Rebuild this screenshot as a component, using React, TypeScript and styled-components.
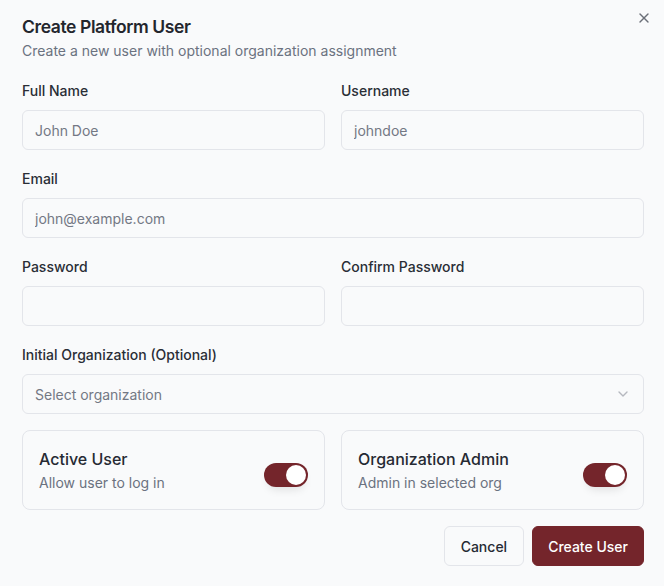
import React, { useState } from 'react'
import styled, { createGlobalStyle } from 'styled-components'

const GlobalStyle = createGlobalStyle`
  html, body {
    margin: 0;
    padding: 0;
    background: #f9fafb;
  }
  body {
    font-family: Inter, 'Noto Sans', sans-serif;
    color: #262a33;
  }
  * {
    box-sizing: border-box;
  }
`

const Dialog = styled.div`
  position: relative;
  width: 664px;
  height: 586px;
  padding: 18px 20px 20px 22px;
  background: #f9fafb;
`

const CloseButton = styled.button`
  position: absolute;
  top: 10px;
  right: 12px;
  width: 16px;
  height: 16px;
  padding: 0;
  border: none;
  background: transparent;
  color: #6b6f78;
  display: flex;
  align-items: center;
  justify-content: center;
  cursor: pointer;
`

const Header = styled.div`
  display: flex;
  flex-direction: column;
  gap: 6px;
`

const Title = styled.h2`
  margin: 0;
  font-size: 17.5px;
  line-height: 17px;
  font-weight: 600;
  letter-spacing: -0.4px;
  color: #23262d;
`

const Subtitle = styled.p`
  margin: 0;
  font-size: 14px;
  line-height: 20px;
  color: #6b7280;
`

const Form = styled.form`
  display: flex;
  flex-direction: column;
  gap: 19px;
  margin-top: 20px;
`

const Row = styled.div<{ cols?: number }>`
  display: grid;
  grid-template-columns: ${({ cols = 1 }) => `repeat(${cols}, 1fr)`};
  gap: 16px;
`

const Field = styled.div`
  display: flex;
  flex-direction: column;
  gap: 9px;
`

const Label = styled.label`
  font-size: 14px;
  line-height: 20px;
  font-weight: 500;
  color: #2a2e36;
`

const Input = styled.input`
  height: 40px;
  width: 100%;
  padding: 0 12px;
  border: 1px solid #e3e5ea;
  border-radius: 6px;
  background: transparent;
  font-family: inherit;
  font-size: 14px;
  color: #262a33;
  outline: none;

  &::placeholder {
    color: #737884;
  }
`

const SelectBox = styled.div`
  height: 40px;
  display: flex;
  align-items: center;
  justify-content: space-between;
  padding: 0 12px;
  border: 1px solid #e3e5ea;
  border-radius: 6px;
  font-size: 14px;
  color: #737884;
`

const Chevron = styled.svg`
  opacity: 0.5;
`

const ToggleGroup = styled(Row)`
  margin-top: -3px;
`

const ToggleCard = styled.div`
  height: 80px;
  display: flex;
  align-items: center;
  justify-content: space-between;
  padding: 0 16px;
  border: 1px solid #e3e5ea;
  border-radius: 8px;
`

const ToggleText = styled.div`
  display: flex;
  flex-direction: column;
  gap: 2px;
`

const ToggleTitle = styled.div`
  font-size: 16px;
  line-height: 24px;
  font-weight: 500;
  color: #262a33;
`

const ToggleHint = styled.div`
  font-size: 14px;
  line-height: 20px;
  color: #6b7280;
`

const SwitchTrack = styled.button<{ on: boolean }>`
  width: 44px;
  height: 24px;
  margin-top: 10px;
  padding: 2px;
  border: none;
  border-radius: 999px;
  background: ${({ on }) => (on ? '#74252b' : '#d9dce1')};
  display: flex;
  justify-content: ${({ on }) => (on ? 'flex-end' : 'flex-start')};
  box-shadow: 0 6px 10px -4px rgba(0, 0, 0, 0.12);
  cursor: pointer;
  flex-shrink: 0;
`

const SwitchThumb = styled.span`
  width: 20px;
  height: 20px;
  border-radius: 50%;
  background: #ffffff;
`

const Footer = styled.div`
  display: flex;
  justify-content: flex-end;
  gap: 8px;
  margin-top: -3px;
`

const Button = styled.button<{ primary?: boolean }>`
  height: 40px;
  padding: 0 ${({ primary }) => (primary ? 15 : 16)}px;
  border-radius: 6px;
  font-family: inherit;
  font-size: 14px;
  font-weight: 500;
  border: 1px solid ${({ primary }) => (primary ? '#74252b' : '#e3e5ea')};
  background: ${({ primary }) => (primary ? '#74252b' : 'transparent')};
  color: ${({ primary }) => (primary ? '#ffffff' : '#262a33')};
  cursor: pointer;
`

const Switch = ({ defaultOn = true }: { defaultOn?: boolean }) => {
  const [on, setOn] = useState(defaultOn)
  return (
    <SwitchTrack type="button" on={on} onClick={() => setOn((v) => !v)}>
      <SwitchThumb />
    </SwitchTrack>
  )
}

const App = () => {
  return (
    <>
      <GlobalStyle />
      <Dialog>
        <CloseButton aria-label="Close">
          <svg width="16" height="16" viewBox="0 0 24 24" fill="none" stroke="currentColor" strokeWidth="2" strokeLinecap="round">
            <path d="M18 6 6 18" />
            <path d="m6 6 12 12" />
          </svg>
        </CloseButton>
        <Header>
          <Title>Create Platform User</Title>
          <Subtitle>Create a new user with optional organization assignment</Subtitle>
        </Header>
        <Form onSubmit={(e) => e.preventDefault()}>
          <Row cols={2}>
            <Field>
              <Label>Full Name</Label>
              <Input placeholder="John Doe" />
            </Field>
            <Field>
              <Label>Username</Label>
              <Input placeholder="johndoe" />
            </Field>
          </Row>
          <Field>
            <Label>Email</Label>
            <Input placeholder="john@example.com" />
          </Field>
          <Row cols={2}>
            <Field>
              <Label>Password</Label>
              <Input type="password" />
            </Field>
            <Field>
              <Label>Confirm Password</Label>
              <Input type="password" />
            </Field>
          </Row>
          <Field>
            <Label>Initial Organization (Optional)</Label>
            <SelectBox>
              <span>Select organization</span>
              <Chevron width="16" height="16" viewBox="0 0 24 24" fill="none" stroke="currentColor" strokeWidth="2" strokeLinecap="round" strokeLinejoin="round">
                <path d="m6 9 6 6 6-6" />
              </Chevron>
            </SelectBox>
          </Field>
          <ToggleGroup cols={2}>
            <ToggleCard>
              <ToggleText>
                <ToggleTitle>Active User</ToggleTitle>
                <ToggleHint>Allow user to log in</ToggleHint>
              </ToggleText>
              <Switch />
            </ToggleCard>
            <ToggleCard>
              <ToggleText>
                <ToggleTitle>Organization Admin</ToggleTitle>
                <ToggleHint>Admin in selected org</ToggleHint>
              </ToggleText>
              <Switch />
            </ToggleCard>
          </ToggleGroup>
          <Footer>
            <Button type="button">Cancel</Button>
            <Button type="submit" primary>
              Create User
            </Button>
          </Footer>
        </Form>
      </Dialog>
    </>
  )
}

export default App
